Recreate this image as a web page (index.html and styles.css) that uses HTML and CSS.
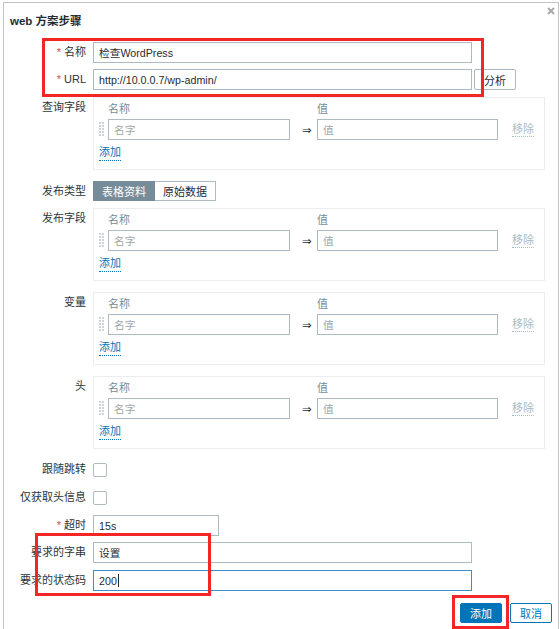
FILE: index.html
```html
<!DOCTYPE html>
<html lang="zh-CN">
<head>
<meta charset="utf-8">
<title>web 方案步骤</title>
<link rel="stylesheet" href="styles.css">
</head>
<body>
<div class="dialog">
  <div class="dlg-head">
    <h4 class="dlg-title">web 方案步骤</h4>
    <button class="dlg-close" aria-label="关闭"><svg width="8" height="8" viewBox="0 0 8 8"><path d="M1 1L7 7M7 1L1 7" stroke="#a8a8a8" stroke-width="2"/></svg></button>
  </div>
  <div class="form">
    <div class="row first">
      <label class="lbl"><span class="req">*</span> 名称</label>
      <div class="fld"><input class="txt wide" value="检查WordPress"></div>
    </div>
    <div class="row tight">
      <label class="lbl"><span class="req">*</span> URL</label>
      <div class="fld inline"><input class="txt wide" value="http://10.0.0.7/wp-admin/"><button class="btn-grey">分析</button></div>
    </div>
    <div class="row">
      <label class="lbl top">查询字段</label>
      <div class="fld">
        <div class="pairs">
          <div class="pair-grid">
            <span></span><span class="th">名称</span><span></span><span class="th">值</span><span></span>
            <span class="drag"></span><input class="txt" placeholder="名字"><span class="arrow">⇒</span><input class="txt" placeholder="值"><a class="rm">移除</a>
          </div>
          <a class="add" href="#">添加</a>
        </div>
      </div>
    </div>
    <div class="row loose seg-row">
      <label class="lbl">发布类型</label>
      <div class="fld">
        <div class="seg"><button class="on">表格资料</button><button>原始数据</button></div>
      </div>
    </div>
    <div class="row">
      <label class="lbl top">发布字段</label>
      <div class="fld">
        <div class="pairs">
          <div class="pair-grid">
            <span></span><span class="th">名称</span><span></span><span class="th">值</span><span></span>
            <span class="drag"></span><input class="txt" placeholder="名字"><span class="arrow">⇒</span><input class="txt" placeholder="值"><a class="rm">移除</a>
          </div>
          <a class="add" href="#">添加</a>
        </div>
      </div>
    </div>
    <div class="row loose">
      <label class="lbl top">变量</label>
      <div class="fld">
        <div class="pairs">
          <div class="pair-grid">
            <span></span><span class="th">名称</span><span></span><span class="th">值</span><span></span>
            <span class="drag"></span><input class="txt" placeholder="名字"><span class="arrow">⇒</span><input class="txt" placeholder="值"><a class="rm">移除</a>
          </div>
          <a class="add" href="#">添加</a>
        </div>
      </div>
    </div>
    <div class="row loose">
      <label class="lbl top">头</label>
      <div class="fld">
        <div class="pairs">
          <div class="pair-grid">
            <span></span><span class="th">名称</span><span></span><span class="th">值</span><span></span>
            <span class="drag"></span><input class="txt" placeholder="名字"><span class="arrow">⇒</span><input class="txt" placeholder="值"><a class="rm">移除</a>
          </div>
          <a class="add" href="#">添加</a>
        </div>
      </div>
    </div>
    <div class="row cb-first">
      <label class="lbl">跟随跳转</label>
      <div class="fld"><input type="checkbox" class="cb"></div>
    </div>
    <div class="row">
      <label class="lbl">仅获取头信息</label>
      <div class="fld"><input type="checkbox" class="cb"></div>
    </div>
    <div class="row">
      <label class="lbl"><span class="req">*</span> 超时</label>
      <div class="fld"><input class="txt short" value="15s"></div>
    </div>
    <div class="row tight">
      <label class="lbl">要求的字串</label>
      <div class="fld"><input class="txt wide" value="设置"></div>
    </div>
    <div class="row">
      <label class="lbl">要求的状态码</label>
      <div class="fld"><div class="txt wide focused">200<span class="caret"></span></div></div>
    </div>
    <div class="actions">
      <button class="btn btn-primary">添加</button>
      <button class="btn btn-alt">取消</button>
    </div>
  </div>
</div>
<div class="mark mark1"></div>
<div class="mark mark2"></div>
<div class="mark mark3"></div>
</body>
</html>
```
FILE: styles.css
```css
* { box-sizing: border-box; }
html, body { margin: 0; padding: 0; background: #fff; overflow: hidden; }
body {
  font-family: "Liberation Sans", "Noto Sans CJK SC", sans-serif;
  font-size: 11px;
  color: #1f2c33;
  width: 560px;
  height: 629px;
}
.dialog {
  margin: 2px 0 0 3px;
  width: 556px;
  height: 640px;
  border: 1px solid #c4c4c4;
  background: #fff;
}
.dlg-head {
  display: flex;
  justify-content: space-between;
  align-items: flex-start;
  padding: 0 3px 0 6px;
}
.dlg-title {
  margin: 0;
  padding-top: 10px;
  font-size: 11.5px;
  line-height: 16px;
  font-weight: bold;
}
.dlg-close {
  margin-top: 4px;
  padding: 0;
  border: 0;
  background: none;
  width: 8px;
  height: 8px;
  line-height: 0;
}
.form { padding: 0 6px 0 0; }
.row {
  display: grid;
  grid-template-columns: 82px 1fr;
  column-gap: 7px;
  margin-top: 7px;
  align-items: start;
}
.row.first { margin-top: 13px; }
.row.tight { margin-top: 6px; }
.row.loose { margin-top: 11px; }
.row.cb-first { margin-top: 10px; }
.lbl {
  text-align: right;
  line-height: 21px;
  white-space: nowrap;
  color: #2b363c;
}
.lbl.top { line-height: 16px; padding-top: 2px; }
.seg-row .lbl { line-height: 20px; }
.req { color: #d64e4e; }
.fld { min-width: 0; }
.fld.inline { display: flex; gap: 2px; }
.txt {
  font: inherit;
  font-size: 10.7px;
  color: #1f2c33;
  height: 21px;
  border: 1px solid #acbbc2;
  padding: 0 5px;
  margin: 0;
  background: #fff;
  outline: none;
  width: 100%;
}
.txt::placeholder { color: #a0a8ad; opacity: 1; }
.wide { width: 379px; }
.short { width: 126px; }
.focused {
  display: flex;
  align-items: center;
  border-color: #3f8dc6;
}
.caret {
  display: inline-block;
  width: 1px;
  height: 13px;
  background: #1f2c33;
  margin-left: 1px;
}
.btn-grey {
  font: inherit;
  height: 21px;
  padding: 0 9px;
  border: 1px solid #acbbc2;
  border-radius: 2px;
  background: #fff;
  color: #1f2c33;
  margin: 0;
}
.pairs {
  width: 452px;
  height: 73px;
  border: 1px solid #ebeef0;
  padding: 3px 6px 7px 5px;
}
.pair-grid {
  display: grid;
  grid-template-columns: 9px 182px 27px 181px auto;
  align-items: center;
  row-gap: 2px;
}
.th { line-height: 16px; color: #768d99; }
.drag {
  width: 5px;
  height: 15px;
  background-image: radial-gradient(circle at 1px 1px, #cdd4d8 0.9px, transparent 1px);
  background-size: 3px 3px;
}
.arrow {
  padding-left: 12px;
  font-family: "DejaVu Sans", sans-serif;
  font-size: 11.5px;
  line-height: 14px;
  color: #1f2c33;
}
.rm {
  justify-self: start;
  margin-left: 14px;
  line-height: 14px;
  color: #acbbc2;
  border-bottom: 1px dotted #acbbc2;
}
.add {
  display: block;
  width: fit-content;
  margin-top: 5px;
  line-height: 15px;
  color: #0275b8;
  text-decoration: none;
  border-bottom: 1px dotted #0275b8;
}
.seg { display: flex; }
.seg button {
  font: inherit;
  height: 20px;
  padding: 0 8px;
  margin: 0;
  border: 1px solid #acbbc2;
  background: #fff;
  color: #1f2c33;
}
.seg button + button { border-left: 0; }
.seg .on { background: #768d99; border-color: #768d99; color: #fff; }
.cb {
  appearance: none;
  -webkit-appearance: none;
  display: block;
  width: 14px;
  height: 14px;
  margin: 3.5px 0 0 0;
  border: 1px solid #acbbc2;
  border-radius: 2px;
  background: #fff;
}
.actions {
  display: flex;
  justify-content: flex-end;
  gap: 8px;
  margin-top: 12px;
}
.btn {
  font: inherit;
  height: 20px;
  padding: 0 9px;
  margin: 0;
  border-radius: 2px;
}
.btn-primary { background: #0275b8; border: 1px solid #0275b8; color: #fff; }
.btn-alt { background: #fff; border: 1px solid #0275b8; color: #0275b8; }
.mark {
  position: absolute;
  border: 3px solid #f22626;
  pointer-events: none;
}
.mark1 { left: 42px; top: 38px; width: 442px; height: 59px; }
.mark2 { left: 35px; top: 533px; width: 176px; height: 63px; }
.mark3 { left: 452px; top: 595px; width: 57px; height: 34px; }
```
